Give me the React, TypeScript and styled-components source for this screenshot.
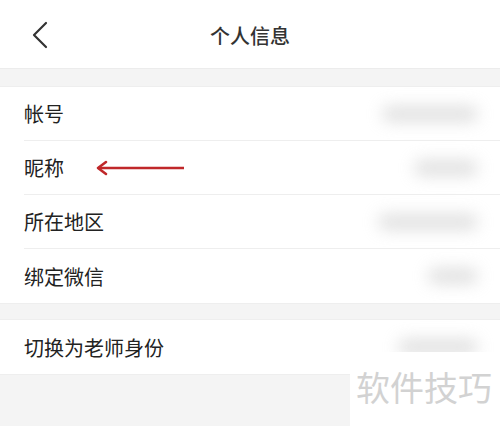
import React from 'react';
import styled, { createGlobalStyle } from 'styled-components';

const GlobalStyle = createGlobalStyle`
  html, body {
    margin: 0;
    padding: 0;
    background: #f4f4f4;
  }
  body {
    font-family: "Noto Sans CJK SC", "Noto Sans", sans-serif;
  }
`;

const Page = styled.div`
  position: relative;
  width: 500px;
  height: 426px;
  overflow: hidden;
  background: #f4f4f4;
`;

const Header = styled.div`
  height: 69px;
  background: #fff;
  display: grid;
  grid-template-columns: 80px 1fr 80px;
  align-items: center;
  border-bottom: 1px solid #ececec;
  box-sizing: border-box;
`;

const BackButton = styled.div`
  display: flex;
  align-items: center;
  padding-left: 31px;
  padding-top: 2px;
`;

const Title = styled.div`
  text-align: center;
  font-size: 20px;
  font-weight: 500;
  color: #333;
  padding-top: 2px;
`;

const Section = styled.div<{ $top: number }>`
  margin-top: ${p => p.$top}px;
  background: #fff;
  border-top: 1px solid #eeeeee;
  border-bottom: 1px solid #eeeeee;
`;

const Row = styled.div<{ $divider?: boolean }>`
  position: relative;
  height: 54px;
  margin-left: 24px;
  display: flex;
  align-items: center;
  justify-content: space-between;
  box-sizing: border-box;
  border-bottom: ${p => (p.$divider ? '1px solid #eeeeee' : 'none')};
`;

const Label = styled.span`
  font-size: 20px;
  color: #222;
`;

const Value = styled.span<{ $w: number }>`
  display: block;
  width: ${p => p.$w}px;
  height: 16px;
  margin-right: 22px;
  border-radius: 8px;
  background: #cccccc;
  filter: blur(8px);
  opacity: 0.6;
`;

const Arrow = styled.svg`
  position: absolute;
  left: 72px;
  top: 19px;
`;

const Watermark = styled.div`
  position: absolute;
  left: 350px;
  top: 352px;
  width: 150px;
  height: 74px;
  background: #fff;
  padding-left: 6px;
  padding-top: 3px;
  box-sizing: border-box;
  font-size: 34px;
  line-height: 64px;
  color: #d2d2d2;
  white-space: nowrap;
`;

const rows = [
  { label: '帐号', w: 96 },
  { label: '昵称', w: 64 },
  { label: '所在地区', w: 100 },
  { label: '绑定微信', w: 50 },
];

export default function App() {
  return (
    <Page>
      <GlobalStyle />
      <Header>
        <BackButton>
          <svg width="18" height="28" viewBox="0 0 18 28">
            <path d="M15 2 L3 14 L15 26" fill="none" stroke="#333" strokeWidth="2.2" strokeLinecap="round" strokeLinejoin="round" />
          </svg>
        </BackButton>
        <Title>个人信息</Title>
        <div />
      </Header>
      <Section $top={17}>
        {rows.map((r, i) => (
          <Row key={r.label} $divider={i < rows.length - 1}>
            <Label>{r.label}</Label>
            <Value $w={r.w} />
            {r.label === '昵称' && (
              <Arrow width="92" height="16" viewBox="0 0 92 16">
                <path d="M2 8 H88" stroke="#c0282a" strokeWidth="2.4" />
                <path d="M10 2 L2 8 L10 14" fill="none" stroke="#c0282a" strokeWidth="2.6" strokeLinecap="round" strokeLinejoin="round" />
              </Arrow>
            )}
          </Row>
        ))}
      </Section>
      <Section $top={15}>
        <Row>
          <Label>切换为老师身份</Label>
          <Value $w={80} />
        </Row>
      </Section>
      <Watermark>软件技巧</Watermark>
    </Page>
  );
}
